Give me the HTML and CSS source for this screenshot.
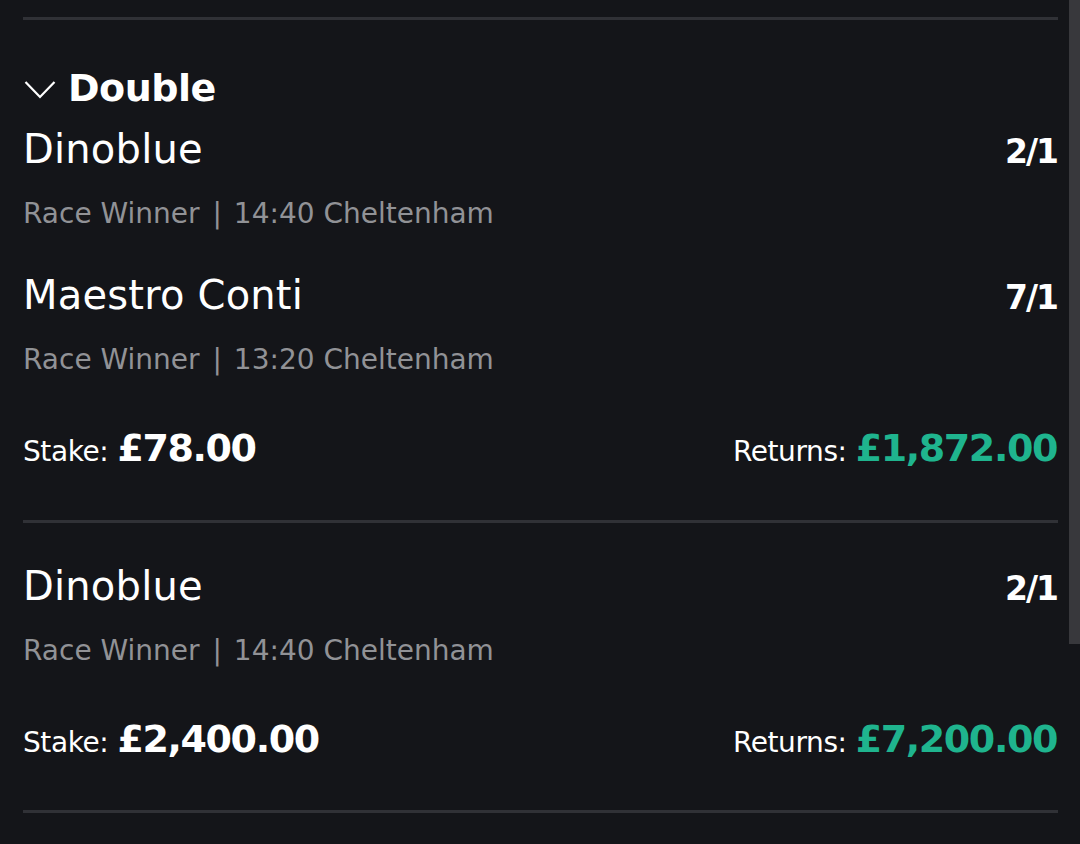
FILE: index.html
```html
<!DOCTYPE html>
<html lang="en">
<head>
<meta charset="utf-8">
<title>Bet slip</title>
<link rel="stylesheet" href="styles.css">
</head>
<body>
<div class="page">
  <div class="divider"></div>
  <section class="bet bet-double">
    <div class="bet-title">
      <svg class="chevron" width="32" height="20" viewBox="0 0 32 20" aria-hidden="true">
        <polyline points="1.5,2 16,17 30.5,2" fill="none" stroke="#ffffff" stroke-width="2.2" stroke-linejoin="miter"/>
      </svg>
      <span class="bet-title-text">Double</span>
    </div>
    <div class="selection">
      <div class="sel-row">
        <span class="sel-name">Dinoblue</span>
        <span class="sel-odds">2/1</span>
      </div>
      <div class="sel-sub">Race Winner <span class="sep">|</span> 14:40 Cheltenham</div>
    </div>
    <div class="selection selection-next">
      <div class="sel-row">
        <span class="sel-name">Maestro Conti</span>
        <span class="sel-odds">7/1</span>
      </div>
      <div class="sel-sub">Race Winner <span class="sep">|</span> 13:20 Cheltenham</div>
    </div>
    <div class="money-row">
      <div class="money">
        <span class="money-label">Stake:</span>
        <span class="money-value">£78.00</span>
      </div>
      <div class="money">
        <span class="money-label">Returns:</span>
        <span class="money-value money-green">£1,872.00</span>
      </div>
    </div>
  </section>
  <div class="divider"></div>
  <section class="bet bet-single">
    <div class="selection">
      <div class="sel-row">
        <span class="sel-name">Dinoblue</span>
        <span class="sel-odds">2/1</span>
      </div>
      <div class="sel-sub">Race Winner <span class="sep">|</span> 14:40 Cheltenham</div>
    </div>
    <div class="money-row">
      <div class="money">
        <span class="money-label">Stake:</span>
        <span class="money-value">£2,400.00</span>
      </div>
      <div class="money">
        <span class="money-label">Returns:</span>
        <span class="money-value money-green">£7,200.00</span>
      </div>
    </div>
  </section>
  <div class="divider"></div>
</div>
<div class="scrollbar"></div>
</body>
</html>
```
FILE: styles.css
```css
html, body {
  margin: 0;
  padding: 0;
  background: #141519;
}
body {
  font-family: "DejaVu Sans", "Noto Sans", sans-serif;
  color: #ffffff;
  height: 844px;
  overflow: hidden;
}
.page {
  padding: 17px 22px 0 23px;
}
.divider {
  height: 3px;
  background: #303136;
}
.bet-double {
  padding-top: 44px;
  padding-bottom: 48px;
}
.bet-single {
  padding-top: 39px;
  padding-bottom: 47px;
}
.bet-title {
  display: flex;
  align-items: center;
  gap: 12px;
  height: 48px;
  margin-bottom: 13px;
}
.chevron {
  display: block;
  margin-left: 1px;
  margin-top: 4px;
}
.bet-title-text {
  font-size: 38px;
  font-weight: 700;
  line-height: 48px;
  letter-spacing: -0.5px;
}
.selection-next {
  margin-top: 39px;
}
.sel-row {
  display: flex;
  justify-content: space-between;
  align-items: baseline;
  height: 48px;
  padding-right: 1px;
}
.sel-name {
  font-size: 40px;
  line-height: 48px;
  letter-spacing: 0.2px;
}
.sel-odds {
  font-size: 33px;
  font-weight: 700;
  line-height: 48px;
  letter-spacing: -2px;
}
.sel-sub {
  margin-top: 23px;
  font-size: 28px;
  line-height: 36px;
  color: #919296;
}
.sep {
  margin: 0 3px 0 4px;
}
.money-row {
  display: flex;
  justify-content: space-between;
  align-items: baseline;
  margin-top: 46px;
  height: 48px;
  padding-right: 1px;
}
.money {
  display: flex;
  align-items: baseline;
  gap: 9px;
}
.money-label {
  font-size: 28px;
  line-height: 48px;
  letter-spacing: -0.4px;
}
.money-value {
  font-size: 38px;
  font-weight: 700;
  line-height: 48px;
  letter-spacing: -1.4px;
}
.money-green {
  color: #1fb48e;
}
.scrollbar {
  position: fixed;
  top: 0;
  right: 0;
  width: 11px;
  height: 644px;
  background: #38383c;
}
```
